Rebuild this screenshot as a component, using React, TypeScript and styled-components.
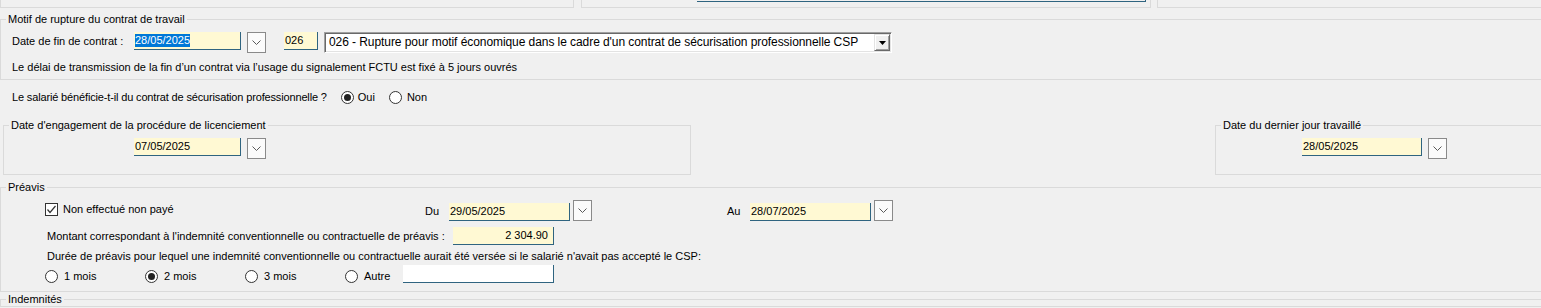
import React from 'react';
import styled, { createGlobalStyle } from 'styled-components';

const GlobalStyle = createGlobalStyle`
  html, body {
    margin: 0;
    padding: 0;
    background: #f0f0f0;
  }
  body {
    font-family: 'Liberation Sans', Arial, sans-serif;
    font-size: 11px;
    color: #000;
    overflow: hidden;
  }
`;

const LINE = '#dadada';
const TEAL = '#2f6480';
const YELLOW = '#fff9d3';

const Screen = styled.div`
  width: 1541px;
  height: 308px;
  overflow: hidden;
  background: #f0f0f0;
`;

// bottom edges of the section above, cut off by the window
const TopStrip = styled.div`
  display: flex;
  height: 8px;
`;

const StubBox = styled.div<{ $w?: number; $ml?: number; $open?: boolean }>`
  box-sizing: border-box;
  height: 8px;
  flex: ${(p) => (p.$w ? 'none' : '1')};
  width: ${(p) => (p.$w ? `${p.$w}px` : 'auto')};
  margin-left: ${(p) => p.$ml ?? 0}px;
  border: 1px solid ${LINE};
  border-top: none;
  border-right: ${(p) => (p.$open ? 'none' : `1px solid ${LINE}`)};
`;

const StubInput = styled.div`
  box-sizing: border-box;
  margin-left: 115px;
  width: 449px;
  height: 2px;
  border-right: 1px solid ${TEAL};
  border-bottom: 1px solid ${TEAL};
`;

const Group = styled.fieldset<{ $w?: number; $ml?: number; $mt?: number; $open?: boolean }>`
  box-sizing: border-box;
  min-width: 0;
  margin: ${(p) => p.$mt ?? 0}px 0 0 ${(p) => p.$ml ?? 0}px;
  padding: 0;
  border: 1px solid ${LINE};
  border-right: ${(p) => (p.$open ? 'none' : `1px solid ${LINE}`)};
  flex: ${(p) => (p.$w ? 'none' : '1')};
  width: ${(p) => (p.$w ? `${p.$w}px` : 'auto')};
`;

const GroupTitle = styled.legend`
  margin-left: 5px;
  padding: 0 2px;
  line-height: 14px;
  font-size: 11px;
  white-space: nowrap;
`;

const GroupBody = styled.div<{ $pl?: number; $pt?: number; $pb?: number }>`
  padding: ${(p) => p.$pt ?? 0}px 0 ${(p) => p.$pb ?? 0}px ${(p) => p.$pl ?? 0}px;
`;

const Row = styled.div<{ $mt?: number; $pl?: number; $h?: number; $align?: string }>`
  display: flex;
  align-items: ${(p) => p.$align ?? 'center'};
  margin-top: ${(p) => p.$mt ?? 0}px;
  padding-left: ${(p) => p.$pl ?? 0}px;
  height: ${(p) => (p.$h ? `${p.$h}px` : 'auto')};
`;

const GroupRow = styled.div`
  display: flex;
  align-items: flex-start;
  margin-top: 14px;
`;

const Label = styled.span<{ $w?: number; $ml?: number; $mt?: number; $mb?: number }>`
  flex: none;
  display: block;
  width: ${(p) => (p.$w ? `${p.$w}px` : 'auto')};
  margin: ${(p) => p.$mt ?? 0}px 0 ${(p) => p.$mb ?? 0}px ${(p) => p.$ml ?? 0}px;
  line-height: 13px;
  white-space: nowrap;
`;

const Field = styled.div<{ $w: number; $h?: number; $ml?: number; $white?: boolean; $right?: boolean }>`
  box-sizing: border-box;
  flex: none;
  width: ${(p) => p.$w}px;
  height: ${(p) => p.$h ?? 18}px;
  margin-left: ${(p) => p.$ml ?? 0}px;
  line-height: ${(p) => (p.$h ?? 18) - 1}px;
  padding: 0 ${(p) => (p.$right ? 5 : 0)}px 0 1px;
  text-align: ${(p) => (p.$right ? 'right' : 'left')};
  background: ${(p) => (p.$white ? '#fff' : YELLOW)};
  border-right: 1px solid ${TEAL};
  border-bottom: 1px solid ${TEAL};
  font-size: 11px;
  white-space: nowrap;
  overflow: hidden;
`;

const Selected = styled.span`
  display: inline-block;
  line-height: 13px;
  background: #0078d7;
  color: #fff;
`;

const DateWrap = styled.div<{ $gap: number; $bottom?: boolean }>`
  display: flex;
  flex: none;
  align-items: ${(p) => (p.$bottom ? 'flex-end' : 'flex-start')};
  gap: ${(p) => p.$gap}px;
`;

const DropBtn = styled.div`
  box-sizing: border-box;
  width: 19px;
  height: 21px;
  display: flex;
  align-items: center;
  justify-content: center;
  background: #fbfbfb;
  border: 1px solid #8a8a8a;
`;

const Combo = styled.div<{ $w: number; $ml?: number }>`
  box-sizing: border-box;
  flex: none;
  width: ${(p) => p.$w}px;
  height: 21px;
  margin-left: ${(p) => p.$ml ?? 0}px;
  display: flex;
  align-items: center;
  background: #fff;
  border: 1px solid;
  border-color: #a0a0a0 #fff #fff #a0a0a0;
  box-shadow: inset 1px 1px 0 #696969, inset -1px -1px 0 #e3e3e3;
`;

const ComboText = styled.span`
  flex: 1;
  padding-left: 4px;
  font-size: 12px;
  line-height: 17px;
  letter-spacing: -0.07px;
  white-space: nowrap;
  overflow: hidden;
`;

const ComboBtn = styled.div`
  box-sizing: border-box;
  width: 16px;
  height: 17px;
  margin-right: 1px;
  display: flex;
  align-items: center;
  justify-content: center;
  background: #f0f0f0;
  border: 1px solid;
  border-color: #e3e3e3 #696969 #696969 #e3e3e3;
  box-shadow: inset 1px 1px 0 #fff, inset -1px -1px 0 #a0a0a0;
`;

const Option = styled.div<{ $w?: number; $gap?: number; $ml?: number; $mt?: number }>`
  display: flex;
  align-items: center;
  flex: none;
  width: ${(p) => (p.$w ? `${p.$w}px` : 'auto')};
  gap: ${(p) => p.$gap ?? 5}px;
  margin-left: ${(p) => p.$ml ?? 0}px;
  margin-top: ${(p) => p.$mt ?? 0}px;
`;

const Radio = styled.span<{ $on?: boolean }>`
  box-sizing: border-box;
  flex: none;
  width: 13px;
  height: 13px;
  border-radius: 50%;
  border: 1px solid #333;
  background: #fff;
  display: flex;
  align-items: center;
  justify-content: center;
  &::after {
    content: '';
    width: 7px;
    height: 7px;
    border-radius: 50%;
    background: ${(p) => (p.$on ? '#222' : 'transparent')};
  }
`;

const Check = styled.span`
  box-sizing: border-box;
  flex: none;
  width: 13px;
  height: 13px;
  border: 1px solid #333;
  background: #fff;
  display: flex;
  align-items: center;
  justify-content: center;
`;

function Chevron() {
  return (
    <svg width="9" height="5" viewBox="0 0 9 5">
      <polyline points="0.5,0.5 4.5,4.5 8.5,0.5" fill="none" stroke="#5a5a5a" strokeWidth="1" />
    </svg>
  );
}

function DateInput({ value, w = 107, gap = 6, selected = false, bottom = false }: { value: string; w?: number; gap?: number; selected?: boolean; bottom?: boolean }) {
  return (
    <DateWrap $gap={gap} $bottom={bottom}>
      <Field $w={w}>{selected ? <Selected>{value}</Selected> : value}</Field>
      <DropBtn>
        <Chevron />
      </DropBtn>
    </DateWrap>
  );
}

function RadioOption({ label, on = false, w, gap, ml }: { label: string; on?: boolean; w?: number; gap?: number; ml?: number }) {
  return (
    <Option $w={w} $gap={gap} $ml={ml}>
      <Radio $on={on} />
      <Label>{label}</Label>
    </Option>
  );
}

export default function App() {
  return (
    <Screen>
      <GlobalStyle />
      <TopStrip>
        <StubBox $w={574} />
        <StubBox $w={570} $ml={7}>
          <StubInput />
        </StubBox>
        <StubBox $ml={6} $open />
      </TopStrip>

      <Group $mt={4} $open>
        <GroupTitle>Motif de rupture du contrat de travail</GroupTitle>
        <GroupBody $pl={11} $pt={6} $pb={5}>
          <Row $align="flex-start">
            <Label $w={122} $mt={3}>Date de fin de contrat :</Label>
            <DateInput value="28/05/2025" selected />
            <Field $w={34} $ml={18}>026</Field>
            <Combo $w={568} $ml={6}>
              <ComboText>026 - Rupture pour motif économique dans le cadre d'un contrat de sécurisation professionnelle CSP</ComboText>
              <ComboBtn>
                <svg width="7" height="4" viewBox="0 0 7 4">
                  <polygon points="0,0 7,0 3.5,4" fill="#000" />
                </svg>
              </ComboBtn>
            </Combo>
          </Row>
          <Row $mt={8}>
            <Label>Le délai de transmission de la fin d’un contrat via l’usage du signalement FCTU est fixé à 5 jours ouvrés</Label>
          </Row>
        </GroupBody>
      </Group>

      <Row $mt={10} $pl={12} $h={14}>
        <Label style={{ letterSpacing: '-0.15px' }}>Le salarié bénéficie-t-il du contrat de sécurisation professionnelle ?</Label>
        <RadioOption label="Oui" on gap={4} ml={14} />
        <RadioOption label="Non" gap={5} ml={14} />
      </Row>

      <GroupRow>
        <Group $w={688} $ml={3}>
          <GroupTitle>Date d'engagement de la procédure de licenciement</GroupTitle>
          <GroupBody $pl={130} $pt={6} $pb={15}>
            <DateInput value="07/05/2025" />
          </GroupBody>
        </Group>
        <Group $ml={524} $open>
          <GroupTitle>Date du dernier jour travaillé</GroupTitle>
          <GroupBody $pl={86} $pt={6} $pb={15}>
            <DateInput value="28/05/2025" w={120} />
          </GroupBody>
        </Group>
      </GroupRow>

      <Group $mt={5} $open>
        <GroupTitle>Préavis</GroupTitle>
        <GroupBody $pl={44} $pt={6} $pb={8}>
          <Row $align="flex-start">
            <Option $w={380} $gap={5} $mt={3}>
              <Check>
                <svg width="11" height="11" viewBox="0 0 11 11">
                  <polyline points="1.5,5.5 4,8.5 9.5,2" fill="none" stroke="#333" strokeWidth="1.2" />
                </svg>
              </Check>
              <Label>Non effectué non payé</Label>
            </Option>
            <Row $align="flex-end" $h={21}>
              <Label $w={24} $mb={3}>Du</Label>
              <DateInput value="29/05/2025" w={121} gap={3} bottom />
              <Label $w={23} $ml={135} $mb={3}>Au</Label>
              <DateInput value="28/07/2025" w={121} gap={3} bottom />
            </Row>
          </Row>
          <Row $mt={6} $pl={2}>
            <Label $w={406}>Montant correspondant à l'indemnité conventionnelle ou contractuelle de préavis :</Label>
            <Field $w={101} $right>2 304.90</Field>
          </Row>
          <Row $mt={5} $pl={2}>
            <Label>Durée de préavis pour lequel une indemnité conventionnelle ou contractuelle aurait été versée si le salarié n'avait pas accepté le CSP:</Label>
          </Row>
          <Row $mt={2} $align="flex-end">
            <RadioOption label="1 mois" w={100} gap={6} />
            <RadioOption label="2 mois" w={100} gap={6} on />
            <RadioOption label="3 mois" w={100} gap={6} />
            <RadioOption label="Autre" w={58} gap={6} />
            <Field $w={151} $white />
          </Row>
        </GroupBody>
      </Group>

      <Group $open>
        <GroupTitle>Indemnités</GroupTitle>
      </Group>
    </Screen>
  );
}
